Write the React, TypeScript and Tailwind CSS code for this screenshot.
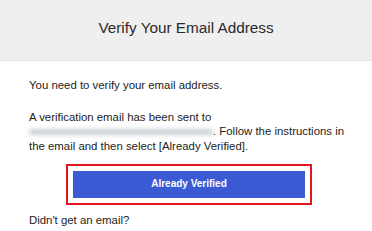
export default function App() {
  return (
    <div className="w-[372px] h-[231px] overflow-hidden bg-white font-['Liberation_Sans',Arial,sans-serif] text-[#222]">
      {/* header */}
      <div className="h-[61px] bg-[#efefef] border-b border-[#e4e4e4] flex items-center justify-center">
        <h1 className="text-[15.3px] text-[#2a2a2a] pb-[4px]">Verify Your Email Address</h1>
      </div>

      <div className="pl-[29px] pr-[22px] pt-[17px] text-[11.4px] leading-[14.5px]">
        <p>You need to verify your email address.</p>
        <p className="mt-[17px]">
          A verification email has been sent to
          <br />
          <span className="inline-block align-middle w-[184px] h-[6px] bg-[#cdd0d6] blur-[2px] rounded-full"></span>
          . Follow the instructions in
          <br />
          the email and then select [Already Verified].
        </p>

        <div className="mt-[11px] ml-[37px] w-[246px] border-2 border-[#e4141e] p-[5px]">
          <button className="w-full h-[27px] bg-[#3a5bd3] text-white text-[10px] font-bold">
            Already Verified
          </button>
        </div>

        <p className="mt-[8px]">Didn't get an email?</p>
      </div>
    </div>
  );
}
